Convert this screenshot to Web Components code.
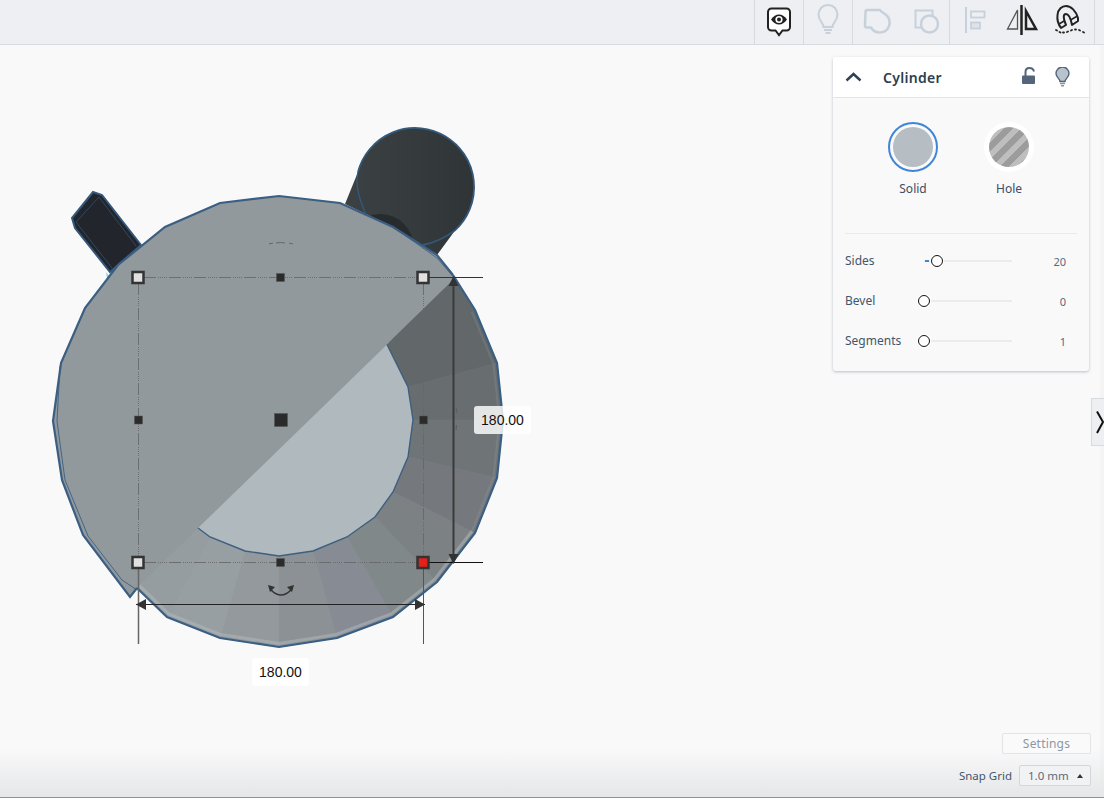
<!DOCTYPE html>
<html lang="en">
<head>
<meta charset="utf-8">
<title>Cylinder</title>
<style>
  html, body { margin: 0; height: 100%; overflow: hidden; }
  body {
    display: flex;
    flex-direction: column;
    height: 798px;
    font-family: "Noto Sans", "Liberation Sans", sans-serif;
    background: #f9f9fa;
  }
  .workspace {
    position: relative;
    flex: 1;
    background: linear-gradient(to right, #f9f9fa 1100px, #f4f4f5 1100px);
  }
</style>
</head>
<body>
<top-toolbar></top-toolbar>
<div class="workspace">
  <scene-view></scene-view>
  <shape-panel name="Cylinder">
    <param-row label="Sides" value="20" pos="13" fill="1"></param-row>
    <param-row label="Bevel" value="0" pos="0"></param-row>
    <param-row label="Segments" value="1" pos="0"></param-row>
  </shape-panel>
  <side-tab></side-tab>
  <grid-controls></grid-controls>
</div>

<script>
// 工具栏图标，坐标直接用页面坐标（viewBox 按按钮偏移）
const OFF = '#c6d1db';
const ICONS = {
  eye: `<path d="M771.5 8.5h15a3.5 3.5 0 0 1 3.5 3.5v15a3.5 3.5 0 0 1-3.5 3.5h-4L779 35l-3.500-4.500h-4a3.500 3.500 0 0 1-3.500-3.500V12a3.500 3.500 0 0 1 3.500-3.500z" fill="#fff" stroke="#222" stroke-width="2"/>
        <path d="M771 19.500c2.500-3.500 5-5 8-5s5.500 1.500 8 5c-2.500 3.500-5 5-8 5s-5.500-1.500-8-5z" fill="#222"/>
        <circle cx="779" cy="19.500" r="3.600" fill="#fff"/><circle cx="779" cy="19.500" r="2" fill="#222"/>`,
  bulb: `<path d="M823.500 27c0-4.500-5-6-5-12.500a9.500 9.500 0 0 1 19 0c0 6.500-5 8-5 12.500z" fill="none" stroke="${OFF}" stroke-width="2"/>
        <path d="M824 30h8M825.500 33h5" stroke="${OFF}" stroke-width="1.800"/>`,
  group: `<path d="M865.500 12a2 2 0 0 1 2-2H880c1 2.500 5.500 3 8 7 3.500 6 1 15.500-8.500 15.500-4.500 0-7-2.500-8.500-5h-4a2 2 0 0 1-2-2z" fill="none" stroke="${OFF}" stroke-width="2.500" stroke-linejoin="round"/>`,
  hole: `<path d="M921 27.500h-5.500v-17h17v5" fill="none" stroke="${OFF}" stroke-width="2"/>
        <circle cx="929.500" cy="24" r="8.500" fill="none" stroke="${OFF}" stroke-width="2.500"/>`,
  align: `<rect x="965" y="7" width="2" height="26" fill="${OFF}"/>
        <rect x="971" y="11.500" width="13.500" height="6" fill="none" stroke="${OFF}" stroke-width="1.800"/>
        <rect x="971" y="22.500" width="9" height="6" fill="#dde3e9" stroke="${OFF}" stroke-width="1.800"/>`,
  mirror: `<path d="M1021.500 5v30" stroke="#222" stroke-width="2.500"/>
        <path d="M1017.500 10v19h-10z" fill="none" stroke="#555" stroke-width="1.300"/>
        <path d="M1026 11v18h10z" fill="none" stroke="#222" stroke-width="2.500"/>`,
  magnet: `<path d="M1061 28C1058 24 1057 19 1057.500 15C1058 9 1062 6 1066 6C1071 6 1076 11 1078 18V21L1072 25C1071 20 1069 14 1066 14C1063 14 1063 18 1066 25z" fill="none" stroke="#222" stroke-width="2" stroke-linejoin="round"/>
        <path d="M1059 24l6-3.500M1070.500 20l7-4" stroke="#222" stroke-width="1.500"/>
        <path d="M1056 30l1 .5M1059.500 32l1 .5M1063 32.500h1M1067 32l1-.5M1071 30.500l1-.5M1075 29.500h1M1079 30l1 .5M1083 32l1 .5" stroke="#222" stroke-width="1.800" stroke-linecap="round"/>`
};

class TopToolbar extends HTMLElement {
  constructor() {
    super();
    this.attachShadow({ mode: 'open' });
  }

  connectedCallback() {
    // [图标, 左边 x, 宽度, 右侧是否有分隔线]
    const items = [['eye', 755, 48, 1], ['bulb', 804, 48, 1], ['group', 853, 48, 0], ['hole', 901, 48, 1],
      ['align', 950, 48, 0], ['mirror', 998, 48, 0], ['magnet', 1046, 48, 1]];
    this.shadowRoot.innerHTML = `
      <style>
        :host {
          display: flex;
          justify-content: flex-end;
          flex: none;
          height: 44px;
          padding-right: 9px;
          background: #eeeff2;
          border-bottom: 1px solid #d6dbe0;
        }
        .btn { height: 44px; box-sizing: content-box; }
        .btn.sep { border-right: 1px solid #d6dbe0; }
        .first { border-left: 1px solid #d6dbe0; }
        svg { display: block; }
      </style>
      ${items.map(([name, x, w, sep], i) => `
        <div class="btn ${sep ? 'sep' : ''} ${i === 0 ? 'first' : ''}">
          <svg width="${w}" height="44" viewBox="${x} 0 ${w} 44">${ICONS[name]}</svg>
        </div>`).join('')}
    `;
  }
}

class ShapePanel extends HTMLElement {
  constructor() {
    super();
    this.attachShadow({ mode: 'open' });
  }

  connectedCallback() {
    this.shadowRoot.innerHTML = `
      <style>
        :host {
          position: absolute;
          top: 12px;
          right: 15px;
          width: 256px;
          height: 314px;
          display: flex;
          flex-direction: column;
          background: #f9f9fa;
          border-radius: 3px;
          box-shadow: 0 1px 3px rgba(70, 85, 100, .35);
          color: #3c4e63;
          font-family: "Noto Sans", "Liberation Sans", sans-serif;
        }
        .head {
          height: 40px;
          display: flex;
          align-items: center;
          background: #fff;
          border-bottom: 1px solid #e3e5e8;
          border-radius: 3px 3px 0 0;
          flex: none;
        }
        .chev { margin-left: 12px; width: 17px; display: block; }
        .name {
          margin-left: 21px;
          flex: 1;
          font-size: 14px;
          font-weight: 600;
          letter-spacing: .3px;
          color: #2c3e50;
        }
        .head-icons { display: flex; gap: 19px; margin-right: 19px; }
        .head-icons svg { display: block; }
        .modes {
          display: flex;
          justify-content: center;
          gap: 46px;
          padding-top: 24px;
          height: 135px;
          box-sizing: border-box;
          flex: none;
        }
        .mode { width: 50px; display: flex; flex-direction: column; align-items: center; gap: 8px; font-size: 12px; }
        .dot {
          width: 50px;
          height: 50px;
          box-sizing: border-box;
          border-radius: 50%;
          background: #fff;
          display: flex;
          align-items: center;
          justify-content: center;
          flex: none;
        }
        .dot.on { background: #f9f9fa; border: 2px solid #3f86d8; }
        .dot i { display: block; width: 40px; height: 40px; border-radius: 50%; flex: none; }
        .solid { background: #b6bec3; }
        .hole { background: repeating-linear-gradient(135deg, #9c9c9c 0 6px, #bebebe 6px 12px); }
        hr { border: 0; border-top: 1px solid #e9eaec; margin: 0 12px; }
        .rows { padding: 7px 12px 0; }
      </style>
      <div class="head">
        <svg class="chev" width="17" height="12" viewBox="0 0 17 12"><path d="M1.500 9.500 8.500 3l7 6.500" fill="none" stroke="#2f4155" stroke-width="2.400"/></svg>
        <span class="name">${this.getAttribute('name')}</span>
        <div class="head-icons">
          <svg width="15" height="20" viewBox="0 0 15 20"><path d="M4.500 9V5C4.500 2.500 6 1 8.500 1s4 1.500 4.500 3.500" fill="none" stroke="#54657a" stroke-width="2"/><rect x="1" y="8.500" width="13" height="8.500" rx="1" fill="#54657a"/></svg>
          <svg width="15" height="20" viewBox="0 0 15 20"><path d="M5 14.500c0-3-4-4-4-8a6.500 6.500 0 0 1 13 0c0 4-4 5-4 8z" fill="#b8c4cd" stroke="#54657a" stroke-width="1.400"/><path d="M5 16.500h5M6 18.700h3" stroke="#8796a5" stroke-width="1.500"/></svg>
        </div>
      </div>
      <div class="modes">
        <div class="mode"><div class="dot on"><i class="solid"></i></div><span>Solid</span></div>
        <div class="mode"><div class="dot"><i class="hole"></i></div><span>Hole</span></div>
      </div>
      <hr>
      <div class="rows"><slot></slot></div>
    `;
  }
}

class ParamRow extends HTMLElement {
  constructor() {
    super();
    this.attachShadow({ mode: 'open' });
  }

  connectedCallback() {
    const pos = Number(this.getAttribute('pos'));
    this.shadowRoot.innerHTML = `
      <style>
        :host {
          display: flex;
          align-items: center;
          height: 40px;
          font-size: 12px;
          color: #43566c;
        }
        .label { width: 79px; flex: none; margin-top: -1px; }
        .track { position: relative; width: 88px; height: 2px; background: #ececed; flex: none; }
        .fill { position: absolute; left: 1px; top: 0; width: 4px; height: 2px; background: #3f86d8; }
        .thumb {
          position: absolute;
          top: -5px;
          left: ${pos - 6}px;
          width: 12px;
          height: 12px;
          box-sizing: border-box;
          border: 1.500px solid #111;
          border-radius: 50%;
          background: #fff;
          box-shadow: 0 0 0 1px #fff;
        }
        .value { width: 54px; text-align: right; font-size: 11px; color: #566a80; }
      </style>
      <span class="label">${this.getAttribute('label')}</span>
      <div class="track">
        ${this.hasAttribute('fill') ? '<div class="fill"></div>' : ''}
        <div class="thumb"></div>
      </div>
      <span class="value">${this.getAttribute('value')}</span>
    `;
  }
}

class DimLabel extends HTMLElement {
  constructor() {
    super();
    this.attachShadow({ mode: 'open' });
  }

  connectedCallback() {
    this.shadowRoot.innerHTML = `
      <style>
        :host {
          position: absolute;
          width: 57px;
          height: 28px;
          display: flex;
          align-items: center;
          justify-content: center;
          border-radius: 3px;
          background: rgba(255, 255, 255, .97);
          font: 14px "Liberation Sans", Arial, sans-serif;
          color: #111;
        }
      </style>
      <slot></slot>
    `;
  }
}

// 3D 模型和选择框
const OUTER = [[453,275],[475,310],[497,363],[503,420],[497,478],[475,533],[437,582],[393,617],[337,638],[279,647],[220,638],[167,617],[137,588]];
const INNER = [[387,344.500],[408,387],[413,420],[408,457],[393,492],[375,517],[347,537],[313,551],[279,556],[245,551],[210,537],[198,528]];
const RIM_TOP = [[137,588],[130,597],[83,535],[62,480],[53,421],[61,363],[85,308],[118,265],[165,227],[220,203],[279,196],[340,203],[393,227],[437,255],[453,275]];
const pts = a => a.map(p => p.join(',')).join(' ');

class SceneView extends HTMLElement {
  constructor() {
    super();
    this.attachShadow({ mode: 'open' });
  }

  segments() {
    // 每段: 内圈两点 + 外圈若干点
    const spans = [[0,2,'#62686a'],[2,3,'#686e70'],[3,4,'#6f7577'],[4,5,'#75797d'],[5,6,'#7c8284'],[6,7,'#81888a'],
      [7,8,'#878b94'],[8,9,'#8b9194'],[9,10,'#93999c'],[10,11,'#989fa2'],[11,12,'#969da0']];
    let inner = 0;
    return spans.map(([a, b, color]) => {
      const ordered = [INNER[inner], INNER[inner + 1], ...OUTER.slice(a, b + 1).reverse()];
      inner++;
      return `<polygon points="${pts(ordered)}" fill="${color}" stroke="${color}" stroke-width=".6"/>`;
    }).join('');
  }

  connectedCallback() {
    const flat = [[455,278],[137,587],[130,597],...RIM_TOP.slice(2)];
    const handle = (x, y, fill) => `<rect x="${x - 5.500}" y="${y - 5.500}" width="11" height="11" fill="${fill}" stroke="#333" stroke-width="2.500"/>`;
    const mid = (x, y, s) => `<rect x="${x - s / 2}" y="${y - s / 2}" width="${s}" height="${s}" fill="#2b2b2b" stroke="#555" stroke-width=".5"/>`;
    const inset = a => a.map(([x, y]) => [280 + (x - 280) * .984, 421 + (y - 421) * .984]);
    this.shadowRoot.innerHTML = `
      <style>
        :host { position: absolute; inset: 0; display: block; }
        svg { display: block; }
        .side { left: 474px; top: 361px; background: rgba(255, 255, 255, .82); }
        .below { left: 252px; top: 613px; }
      </style>
      <svg width="1104" height="753" viewBox="0 45 1104 753">
        <defs>
          <linearGradient id="ear" x1="0" x2="1" y1="0" y2="0">
            <stop offset="0" stop-color="#3c4144"/><stop offset="1" stop-color="#2f3437"/>
          </linearGradient>
        </defs>
        <!-- 右耳 -->
        <path d="M345 204 358 172A59 59 0 1 1 455 230.400L437 255 393 227z" fill="url(#ear)"/>
        <ellipse cx="380" cy="248" rx="34" ry="34" fill="#262b2e"/>
        <path d="M358 172A59 59 0 1 1 455 230.400C445 238 433 243 423 245" fill="none" stroke="#33597c" stroke-width="1.800"/>
        <path d="M358 172C355 185 359 198 366 215" fill="none" stroke="#33597c" stroke-width="1.300"/>
        <!-- 左耳 -->
        <polygon points="93,192 102,195 141,245 110,272 75,228 72,218" fill="#22252b" stroke="#35587a" stroke-width="2"/>
        <path d="M99 197 76 222 112 268M99 197 136 246" fill="none" stroke="#35587a" stroke-width=".7"/>
        <path d="M106 272l4 5-3 1z" fill="#7cd5f0"/>
        <!-- 圆环 -->
        <polygon points="${pts([...OUTER, ...RIM_TOP])}" fill="#92999c"/>
        ${this.segments()}
        <polyline points="${pts(inset(OUTER.slice(1, 6)))}" fill="none" stroke="#a9b3b9" stroke-width="2" opacity=".16"/>
        <polyline points="${pts(inset(OUTER.slice(5)))}" fill="none" stroke="#aeb8be" stroke-width="3" opacity=".55"/>
        <polygon points="${pts(flat)}" fill="#92999c"/>
        <polygon points="${pts(INNER)}" fill="#b0b9bd"/>
        <polyline points="${pts(INNER)}" fill="none" stroke="#3d5f80" stroke-width="1.400"/>
        <polyline points="${pts(OUTER)}" fill="none" stroke="#3b5f82" stroke-width="2.200"/>
        <polyline points="${pts(RIM_TOP)}" fill="none" stroke="#3b5f82" stroke-width="2.200"/>
        <path d="M60 366 57 421 65 480 88 536 122 580 137 590" fill="none" stroke="#3b5f82" stroke-width=".9"/>
        <path d="M393 227 437 258 456 280" fill="none" stroke="#3b5f82" stroke-width=".8"/>
        <!-- 选择框 -->
        <g fill="none" stroke="#666" stroke-width="1" stroke-dasharray="12 2 1 1 1 1 1 1 1 1 1 2" opacity=".85">
          <path d="M144 277.500H417M144 562.500H417M138.500 283V556M423.500 283V556"/>
        </g>
        <path d="M138.500 568V644" stroke="#666" stroke-width="1.500"/>
        <path d="M423.500 568V644" stroke="#555" stroke-width="1"/>
        <path d="M136 604.500H425" stroke="#222" stroke-width="1"/>
        <path d="M453.500 280V558" stroke="#3a3a3a" stroke-width="2"/>
        <path d="M429 277.500H483" stroke="#333" stroke-width="1"/>
        <path d="M429 562.500H483" stroke="#111" stroke-width="1"/>
        <path d="M136 604.500 146 599V610zM425 604.500 415 599V610zM453.500 276 448.500 286H458.500zM453.500 564 448.500 554H458.500z" fill="#333"/>
        <path d="M456 408l1 5M456 430l.5-5" stroke="#555" stroke-width=".8"/>
        ${mid(280.500, 277.500, 8)}${mid(138.500, 420, 8)}${mid(423.500, 420, 8)}${mid(280.500, 562.500, 8)}${mid(281, 420, 13)}
        ${handle(138, 277.500, '#e0e0e0')}${handle(423, 277.500, '#e0e0e0')}${handle(138, 562.500, '#e0e0e0')}${handle(423, 562.500, '#e4201b')}
        <path d="M269 244l4-1M276 243q5-1 9 0M289 243l4 1" fill="none" stroke="#666" stroke-width="1"/>
        <path d="M271 590q10 10 20 0" fill="none" stroke="#333" stroke-width="1.500"/>
        <path d="M268 585l7 2-5 5zM294 585l-7 2 5 5z" fill="#333"/>
      </svg>
      <dim-label class="side">180.00</dim-label>
      <dim-label class="below">180.00</dim-label>
    `;
  }
}

class SideTab extends HTMLElement {
  constructor() {
    super();
    this.attachShadow({ mode: 'open' });
  }

  connectedCallback() {
    this.shadowRoot.innerHTML = `
      <style>
        :host {
          position: absolute;
          top: 353px;
          right: 0;
          width: 12px;
          height: 46px;
          background: #eeeff2;
          border: 1px solid #d6dbe0;
          border-right: 0;
        }
        svg { display: block; }
      </style>
      <svg width="12" height="46" viewBox="0 0 12 46"><path d="M5 12.500 11 23 5 34" fill="none" stroke="#111" stroke-width="2"/></svg>
    `;
  }
}

class GridControls extends HTMLElement {
  constructor() {
    super();
    this.attachShadow({ mode: 'open' });
  }

  connectedCallback() {
    this.shadowRoot.innerHTML = `
      <style>
        :host {
          position: absolute;
          left: 0;
          right: 0;
          bottom: 0;
          height: 65px;
          box-sizing: border-box;
          padding-right: 13px;
          display: flex;
          flex-direction: column;
          align-items: flex-end;
          gap: 11px;
          background: linear-gradient(to bottom, rgba(230, 231, 232, 0) 25%, #e6e7e8 98%);
          border-bottom: 1px solid #8f9296;
          font-family: "Noto Sans", "Liberation Sans", sans-serif;
          font-size: 11.500px;
        }
        .settings {
          width: 89px;
          height: 21px;
          box-sizing: border-box;
          display: flex;
          align-items: center;
          justify-content: center;
          background: #fafafb;
          border: 1px solid #e2e4e7;
          border-radius: 2px;
          color: #8b97a5;
          font-size: 12px;
          letter-spacing: .2px;
        }
        .snap { display: flex; align-items: center; gap: 7px; color: #43566c; }
        .select {
          width: 72px;
          height: 21px;
          box-sizing: border-box;
          display: flex;
          align-items: center;
          padding-left: 8px;
          gap: 8px;
          background: #f1f2f3;
          border: 1px solid #d3d6da;
          border-radius: 2px;
          color: #5b6b7d;
        }
        .caret { width: 0; height: 0; border: 3px solid transparent; border-top: 0; border-bottom: 4px solid #333; }
      </style>
      <div class="settings">Settings</div>
      <div class="snap">
        <span>Snap Grid</span>
        <div class="select"><span>1.0 mm</span><i class="caret"></i></div>
      </div>
    `;
  }
}

customElements.define('top-toolbar', TopToolbar);
customElements.define('shape-panel', ShapePanel);
customElements.define('param-row', ParamRow);
customElements.define('dim-label', DimLabel);
customElements.define('scene-view', SceneView);
customElements.define('side-tab', SideTab);
customElements.define('grid-controls', GridControls);
</script>
</body>
</html>
